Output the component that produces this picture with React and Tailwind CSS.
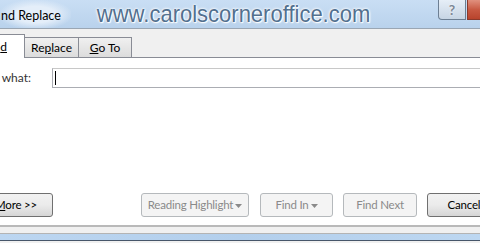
import React from "react";

const ui = { fontFamily: 'Lato, "Noto Sans", sans-serif' };

const WinButton = ({ children, width, disabled, className = "" }) => (
  <div
    className={`h-[24px] shrink-0 flex items-center justify-center whitespace-nowrap rounded-[3px] border text-[11.5px] tracking-[-0.2px] ${
      disabled
        ? "border-[#b5b9bc] bg-[#f4f4f4] text-[#8a8a8a]"
        : "border-[#707070] bg-gradient-to-b from-[#f2f2f2] via-[#ebebeb] to-[#d6d6d6] text-black"
    } ${className}`}
    style={{ width }}
  >
    {children}
  </div>
);

const Caret = () => (
  <svg width="7" height="4" viewBox="0 0 7 4" className="ml-[2px] mt-[1px]">
    <path d="M0 0h7L3.5 4z" fill="#8a8a8a" />
  </svg>
);

export default function App() {
  return (
    <div className="w-[480px] h-[243px] overflow-hidden bg-[#f0f0f0] flex flex-col" style={ui}>
      {/* Title bar */}
      <div className="h-[29px] shrink-0 flex items-start bg-gradient-to-b from-[#c9def4] to-[#b9d2ec] border-b border-[#9aa6b3] overflow-hidden">
        <div className="h-[29px] flex items-center pt-[3px] pl-[1px] pr-[10px] text-[12.5px] text-black whitespace-nowrap bg-[radial-gradient(ellipse_at_center,_#e4eef9_40%,_transparent_75%)]">
          nd Replace
        </div>
        <div
          className="ml-[26px] mt-[1px] text-[22px] leading-[26px] text-[#52708f] whitespace-nowrap scale-y-[1.12] [text-shadow:0_0_1px_#fff,0_0_2px_#fff,0_0_3px_#fff,1px_1px_1px_#fff]"
          style={{ fontFamily: '"Liberation Sans", sans-serif' }}
        >
          www.carolscorneroffice.com
        </div>
        <div className="flex-1" />
        <div className="w-[28px] h-[20px] mr-[1px] flex items-center justify-center rounded-bl-[4px] border border-t-0 border-[#6d7f93] bg-gradient-to-b from-[#e6eef7] to-[#c7d5e4] text-[14px] font-bold text-[#7d8896] [text-shadow:0_0_2px_#fff]">
          ?
        </div>
        <div className="w-[13px] h-[20px] border-l border-b border-[#8a3a2c] bg-gradient-to-b from-[#e0907e] via-[#c85a43] to-[#b8432c]" />
      </div>

      {/* Tabs */}
      <div className="h-[29px] shrink-0 flex items-end text-[12px] text-black">
        <div className="w-[25px] h-[24px] flex items-center justify-end pr-[17px] bg-white border-r border-t border-[#898c95] overflow-hidden">
          <span className="whitespace-nowrap">
            Fin<span className="underline">d</span>
          </span>
        </div>
        <div className="w-[54px] h-[21px] flex items-center justify-center border-t border-r border-b border-[#898c95] bg-gradient-to-b from-[#f0f0f0] to-[#dcdcdc]">
          Re<span className="underline">p</span>lace
        </div>
        <div className="w-[53px] h-[21px] flex items-center justify-center border-t border-r border-b border-[#898c95] bg-gradient-to-b from-[#f0f0f0] to-[#dcdcdc]">
          <span className="underline">G</span>o To
        </div>
        <div className="flex-1 h-[1px] bg-[#898c95]" />
      </div>

      {/* Panel */}
      <div className="h-[169px] shrink-0 bg-white border-b-2 border-[#b9b9b9] flex flex-col justify-between">
        <div className="pt-[10px] flex items-center">
          <div className="w-[52px] shrink-0 text-[12px] text-[#333] whitespace-nowrap overflow-hidden flex justify-end pr-[21px]">
            <span>
              Fi<span className="underline">n</span>d what:
            </span>
          </div>
          <div className="h-[20px] flex-1 -mr-[10px] border border-[#abadb3] border-t-[#c8c8c8] bg-white flex items-center pl-[2px]">
            <div className="w-[1px] h-[14px] bg-black" />
          </div>
        </div>
        <div className="pb-[8px] flex items-center -ml-[21px]">
          <WinButton width={74}>
            <span>
              <span className="underline">M</span>ore &gt;&gt;
            </span>
          </WinButton>
          <WinButton width={108} disabled className="ml-[88px]">
            Reading Highlight
            <Caret />
          </WinButton>
          <WinButton width={73} disabled className="ml-[11px]">
            Find In
            <Caret />
          </WinButton>
          <WinButton width={74} disabled className="ml-[10px]">
            Find Next
          </WinButton>
          <WinButton width={74} className="ml-[10px]">
            Cancel
          </WinButton>
        </div>
      </div>

      {/* Window bottom */}
      <div className="h-[7px] shrink-0 bg-[#f0f0f0] border-b border-[#b4b4b4]" />
      <div className="h-[6px] shrink-0 bg-gradient-to-r from-[#bcd6f1] via-[#b3cfec] to-[#bdd7f1]" />
      <div className="h-[1px] shrink-0 bg-[#47566a]" />
    </div>
  );
}
